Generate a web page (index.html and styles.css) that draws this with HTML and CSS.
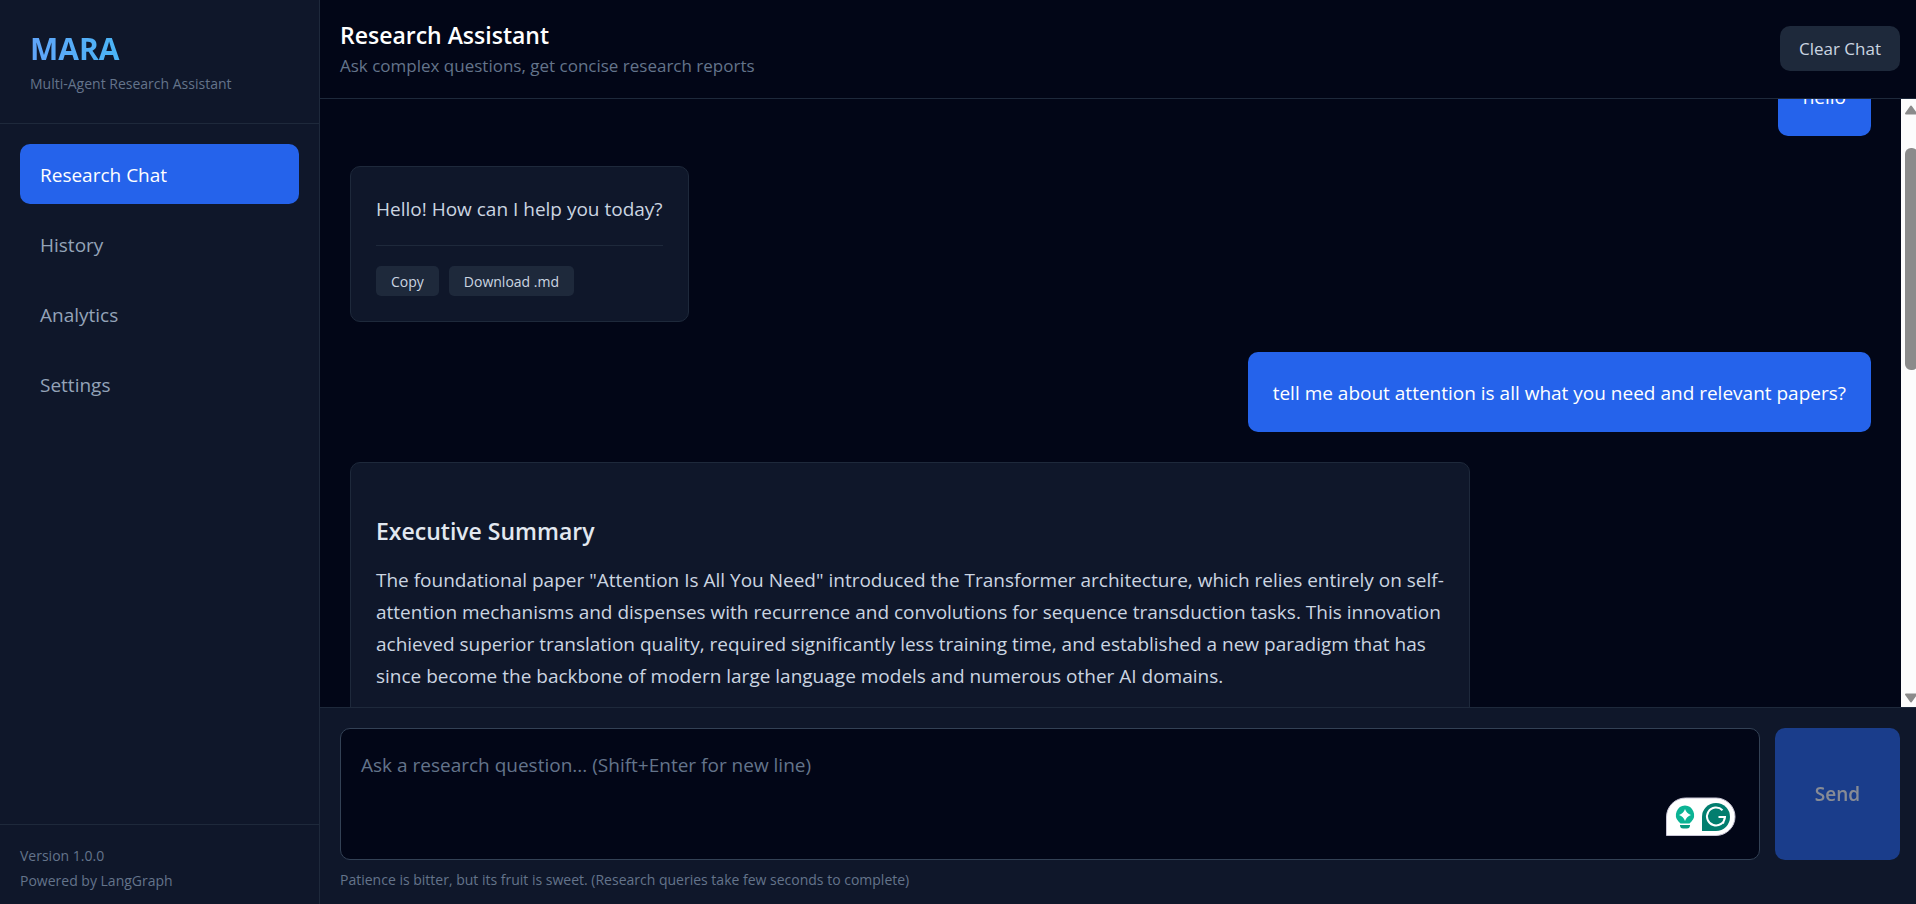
FILE: index.html
```html
<!DOCTYPE html>
<html lang="en">
<head>
<meta charset="utf-8">
<title>MARA</title>
<link rel="stylesheet" href="styles.css">
</head>
<body>
<div class="app">
  <aside class="sidebar">
    <div class="brand">
      <h1 class="brand-name">MARA</h1>
      <p class="brand-tagline">Multi-Agent Research Assistant</p>
    </div>
    <nav class="nav">
      <button class="nav-item active" type="button">Research Chat</button>
      <button class="nav-item" type="button">History</button>
      <button class="nav-item" type="button">Analytics</button>
      <button class="nav-item" type="button">Settings</button>
    </nav>
    <div class="sidebar-footer">
      <p>Version 1.0.0</p>
      <p>Powered by LangGraph</p>
    </div>
  </aside>
  <main class="main">
    <header class="header">
      <div>
        <h2 class="header-title">Research Assistant</h2>
        <p class="header-subtitle">Ask complex questions, get concise research reports</p>
      </div>
      <button class="clear" type="button">Clear Chat</button>
    </header>
    <div class="chat">
      <div class="messages">
        <div class="bubble user">hello</div>
        <div class="bubble reply">
          <p class="text">Hello! How can I help you today?</p>
          <div class="actions">
            <button class="action" type="button">Copy</button>
            <button class="action" type="button">Download .md</button>
          </div>
        </div>
        <div class="bubble user">tell me about attention is all what you need and relevant papers?</div>
        <div class="bubble reply">
          <h3 class="section-title">Executive Summary</h3>
          <p class="text">The foundational paper "Attention Is All You Need" introduced the Transformer architecture, which relies entirely on self-attention mechanisms and dispenses with recurrence and convolutions for sequence transduction tasks. This innovation achieved superior translation quality, required significantly less training time, and established a new paradigm that has since become the backbone of modern large language models and numerous other AI domains.</p>
        </div>
      </div>
      <div class="scrollbar" aria-hidden="true">
        <svg class="arrow" width="14" height="10" viewBox="0 0 14 10"><path d="M7 1.5 12 8.5H2Z" fill="#8b8b8b" stroke="#8b8b8b" stroke-width="2" stroke-linejoin="round"/></svg>
        <div class="thumb"></div>
        <svg class="arrow arrow-down" width="14" height="10" viewBox="0 0 14 10"><path d="M7 8.5 12 1.5H2Z" fill="#8b8b8b" stroke="#8b8b8b" stroke-width="2" stroke-linejoin="round"/></svg>
      </div>
    </div>
    <form class="composer">
      <div class="composer-row">
        <div class="field">
          <textarea class="input" aria-label="Research question" placeholder="Ask a research question... (Shift+Enter for new line)"></textarea>
          <svg class="assist" width="70" height="40" viewBox="0 0 70 40" aria-hidden="true">
            <path d="M.5 38.5V20A19 19 0 0 1 19.500 1H50A19 18.750 0 0 1 50 38.500Z" fill="#fff" stroke="#c9c6d6"/>
            <path d="M19 8.500A9.500 9.500 0 0 0 12.500 24.500L14.500 26.500H23.500L25.500 24.500A9.500 9.500 0 0 0 19 8.500Z" fill="#0bb394"/>
            <path d="M14 28H24V29A3 3 0 0 1 21 31.500H17A3 3 0 0 1 14 29Z" fill="#079a80"/>
            <path d="M19 12Q20.500 16.500 25 18Q20.500 19.500 19 24Q17.500 19.500 13 18Q17.500 16.500 19 12Z" fill="#fff"/>
            <path d="M36 34V20A14 14 0 1 1 50 34Z" fill="#027e6f"/>
            <path d="M56.500 13.200A9 9 0 1 0 59 20H52.500M59 20L57 26.500" fill="none" stroke="#fff" stroke-width="2"/>
          </svg>
        </div>
        <button class="send" type="submit" disabled>Send</button>
      </div>
      <p class="hint">Patience is bitter, but its fruit is sweet. (Research queries take few seconds to complete)</p>
    </form>
  </main>
</div>
</body>
</html>
```
FILE: styles.css
```css
* {
  box-sizing: border-box;
  margin: 0;
}

body,
button,
textarea {
  font-family: "Open Sans", "Noto Sans", sans-serif;
}

body {
  background: #020617;
  color: #cbd5e1;
  font-size: 19px;
}

button {
  border: 0;
  cursor: pointer;
}

.app {
  display: flex;
  height: 100vh;
  overflow: hidden;
}

.sidebar {
  display: flex;
  flex-direction: column;
  flex: none;
  width: 320px;
  background: #0f172a;
  border-right: 1px solid #1e293b;
}

.brand {
  padding: 29px 30px;
  border-bottom: 1px solid #1e293b;
}

.brand-name {
  width: max-content;
  background: linear-gradient(to right, #60a5fa, #22d3ee 259px);
  background-clip: text;
  color: transparent;
  font-size: 30px;
  font-weight: 700;
  line-height: 40px;
}

.brand-tagline {
  color: #64748b;
  font-size: 14px;
  line-height: 20px;
  margin-top: 5px;
}

.nav {
  display: flex;
  flex: 1;
  flex-direction: column;
  gap: 10px;
  padding: 20px;
}

.nav-item {
  height: 60px;
  padding: 2px 20px 0;
  border-radius: 10px;
  background: none;
  color: #94a3b8;
  font-size: 19px;
  text-align: left;
}

.nav-item.active {
  background: #2563eb;
  color: #fff;
}

.sidebar-footer {
  padding: 18px 20px 11px;
  border-top: 1px solid #1e293b;
  color: #64748b;
  font-size: 14px;
  line-height: 25px;
}

.main {
  display: flex;
  flex: 1;
  flex-direction: column;
  min-width: 0;
}

.header {
  display: flex;
  align-items: center;
  justify-content: space-between;
  padding: 18px 16px 20px 20px;
  border-bottom: 1px solid #1e293b;
}

.header-title {
  color: #fff;
  font-size: 23px;
  font-weight: 600;
  line-height: 35px;
}

.header-subtitle {
  color: #64748b;
  font-size: 17px;
  line-height: 25px;
}

.clear {
  height: 45px;
  padding: 0 19px;
  border-radius: 10px;
  background: #1e293b;
  color: #cbd5e1;
  font-size: 17px;
}

.chat {
  display: flex;
  flex: 1;
  min-height: 0;
}

.messages {
  display: flex;
  flex: 1;
  flex-direction: column;
  gap: 30px;
  min-width: 0;
  padding: 0 30px;
  overflow: hidden;
}

.bubble {
  flex: none;
  max-width: 1120px;
  padding: 26px 25px 24px;
  border-radius: 10px;
  line-height: 30px;
}

.bubble.user {
  align-self: flex-end;
  background: #2563eb;
  color: #fff;
}

/* The list is scrolled part-way past the first message. */
.bubble.user:first-child {
  margin-top: -43px;
}

.bubble.reply {
  align-self: flex-start;
  padding-bottom: 25px;
  background: #0f172a;
  border: 1px solid #1e293b;
}

.text {
  line-height: 32px;
  margin-bottom: 20px;
}

.section-title {
  color: #e2e8f0;
  font-size: 23px;
  font-weight: 600;
  line-height: 35px;
  margin: 25px 0 15px;
}

.actions {
  display: flex;
  gap: 10px;
  padding-top: 20px;
  border-top: 1px solid #1e293b;
}

.action {
  height: 30px;
  padding: 0 15px;
  border-radius: 5px;
  background: #1e293b;
  color: #cbd5e1;
  font-size: 14px;
}

.scrollbar {
  display: flex;
  flex-direction: column;
  flex: none;
  width: 15px;
  padding: 6px 0 4px 3px;
  background: #fcfcfc;
  overflow: hidden;
}

.arrow {
  flex: none;
}

.thumb {
  width: 13px;
  height: 222px;
  margin: 33px 0 0 1px;
  border-radius: 6px;
  background: #8b8b8b;
}

.arrow-down {
  margin-top: auto;
}

.composer {
  padding: 20px 16px 14px 20px;
  background: #0f172a;
  border-top: 1px solid #1e293b;
}

.composer-row {
  display: flex;
  gap: 15px;
}

.field {
  position: relative;
  display: flex;
  flex: 1;
}

.input {
  flex: 1;
  height: 132px;
  padding: 20px;
  border: 1px solid #334155;
  border-radius: 10px;
  background: #020617;
  color: #e2e8f0;
  font-size: 19px;
  line-height: 32px;
  resize: none;
}

.input::placeholder {
  color: #64748b;
}

.assist {
  position: absolute;
  right: 24px;
  bottom: 23px;
}

.send {
  width: 125px;
  border-radius: 10px;
  background: #2563eb;
  color: #fff;
  font-size: 19px;
  font-weight: 600;
  opacity: .5;
}

.hint {
  margin-top: 10px;
  color: #64748b;
  font-size: 14px;
  line-height: 20px;
}
```
